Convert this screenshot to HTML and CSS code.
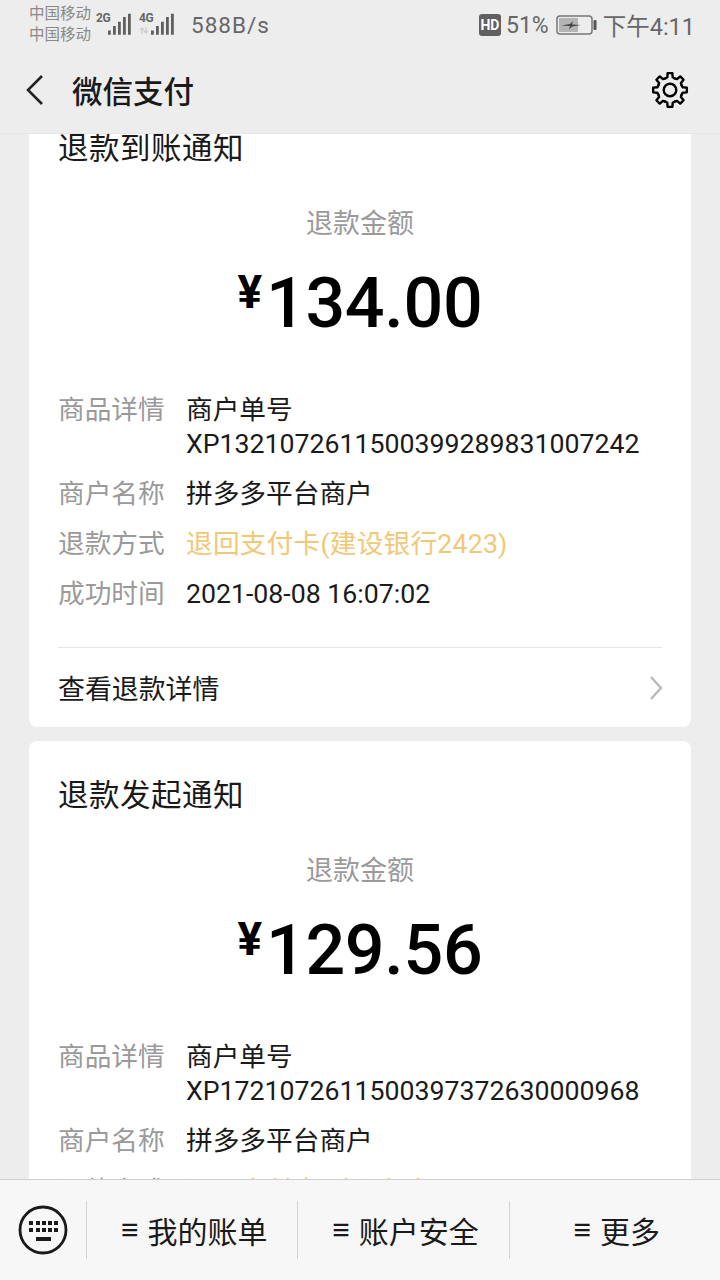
FILE: index.html
```html
<!DOCTYPE html>
<html lang="zh-CN">
<head>
    <meta charset="UTF-8">
    <meta name="viewport" content="width=device-width, initial-scale=1.0">
    <title>微信支付</title>
    <link rel="stylesheet" href="styles.css">
</head>
<body>
    <div class="app">
        <div class="status-bar">
            <div class="status-left">
                <div class="carriers">
                    <div>中国移动</div>
                    <div>中国移动</div>
                </div>
                <div class="signal">
                    <div class="net-col"><span class="net">2G</span></div>
                    <svg width="24" height="24" viewBox="0 0 24 24"><path d="M0 17.500h2.800v4.300H0zM5 13h2.800v8.800H5zM10 8.700h2.800v13.100H10zM15 4h2.800v17.800H15zM20 .800h2.800v21H20z" fill="#5f5f5f"/></svg>
                </div>
                <div class="signal second">
                    <div class="net-col">
                        <span class="net">4G</span>
                        <svg width="11" height="7" viewBox="0 0 11 7"><path d="M3 7V1L1 3M3 1l2 2M7 0v6L5 4M7 6l2-2" fill="none" stroke="#ccc" stroke-width="1.300"/></svg>
                    </div>
                    <svg width="24" height="24" viewBox="0 0 24 24"><path d="M0 17.500h2.800v4.300H0zM5 13h2.800v8.800H5zM10 8.700h2.800v13.100H10zM15 4h2.800v17.800H15zM20 .800h2.800v21H20z" fill="#5f5f5f"/></svg>
                </div>
                <span class="speed">588B/s</span>
            </div>
            <div class="status-right">
                <span class="hd">HD</span>
                <span class="pct">51%</span>
                <svg class="battery" width="41" height="20" viewBox="0 0 41 20">
                    <rect x="1" y="1" width="35" height="18" rx="3" fill="none" stroke="#777" stroke-width="1.500"/>
                    <rect x="3" y="3" width="19" height="14" fill="#b4b4b4"/>
                    <path d="M5 10.500l9-1.500 3-3-1 3.500 9 .5-9 1.500-3 3 1-3.500z" fill="#444"/>
                    <rect x="37.500" y="5" width="3" height="10" rx="1" fill="#555"/>
                </svg>
                <span class="clock">下午4:11</span>
            </div>
        </div>

        <div class="nav-bar">
            <svg class="back" width="20" height="32" viewBox="0 0 20 32"><path d="M17 2L3 16l14 14" fill="none" stroke="#222" stroke-width="2.600"/></svg>
            <div class="nav-title">微信支付</div>
            <svg class="gear" width="38" height="38" viewBox="0 0 38 38">
                <defs>
                    <path id="tooth" d="M14.220 7.450L16.300 6.300 16.630 2.170H21.370L21.700 6.300 23.780 7.450" fill="none" stroke="#000" stroke-width="2.400" stroke-linejoin="round" stroke-linecap="round"/>
                </defs>
                <use href="#tooth"/>
                <use href="#tooth" transform="rotate(45 19 19)"/>
                <use href="#tooth" transform="rotate(90 19 19)"/>
                <use href="#tooth" transform="rotate(135 19 19)"/>
                <use href="#tooth" transform="rotate(180 19 19)"/>
                <use href="#tooth" transform="rotate(225 19 19)"/>
                <use href="#tooth" transform="rotate(270 19 19)"/>
                <use href="#tooth" transform="rotate(315 19 19)"/>
                <circle cx="19" cy="19" r="6.300" fill="none" stroke="#000" stroke-width="2.400"/>
            </svg>
        </div>

        <div class="feed">
            <div class="card first">
                <div class="card-title">退款到账通知</div>
                <div class="amount-label">退款金额</div>
                <div class="amount"><span class="yen">¥</span>134.00</div>
                <div class="rows">
                    <div class="row">
                        <div class="key">商品详情</div>
                        <div class="val">商户单号<br>XP1321072611500399289831007242</div>
                    </div>
                    <div class="row">
                        <div class="key">商户名称</div>
                        <div class="val">拼多多平台商户</div>
                    </div>
                    <div class="row">
                        <div class="key">退款方式</div>
                        <div class="val orange">退回支付卡(建设银行2423)</div>
                    </div>
                    <div class="row">
                        <div class="key">成功时间</div>
                        <div class="val">2021-08-08 16:07:02</div>
                    </div>
                </div>
                <div class="card-link">
                    <span>查看退款详情</span>
                    <svg width="14" height="24" viewBox="0 0 14 24"><path d="M2 1l10 11L2 23" fill="none" stroke="#b8b8b8" stroke-width="2.400"/></svg>
                </div>
            </div>

            <div class="card">
                <div class="card-title">退款发起通知</div>
                <div class="amount-label">退款金额</div>
                <div class="amount"><span class="yen">¥</span>129.56</div>
                <div class="rows">
                    <div class="row">
                        <div class="key">商品详情</div>
                        <div class="val">商户单号<br>XP1721072611500397372630000968</div>
                    </div>
                    <div class="row">
                        <div class="key">商户名称</div>
                        <div class="val">拼多多平台商户</div>
                    </div>
                    <div class="row">
                        <div class="key">退款方式</div>
                        <div class="val orange">退回支付卡(建设银行2423)</div>
                    </div>
                </div>
            </div>
        </div>

        <div class="tab-bar">
            <div class="kb-cell">
                <svg width="50" height="50" viewBox="0 0 50 50">
                    <circle cx="25" cy="25" r="23" fill="none" stroke="#1a1a1a" stroke-width="2.800"/>
                    <path d="M11 16h4v4h-4zM18 16h4v4h-4zM24 16h4v4h-4zM30 16h4v4h-4zM36 16h4v4h-4zM11 23h4v4h-4zM18 23h4v4h-4zM24 23h4v4h-4zM30 23h4v4h-4zM36 23h4v4h-4zM18 32h15v4H18z" fill="#1a1a1a"/>
                </svg>
            </div>
            <div class="tab"><span class="tab-lines">≡</span>我的账单</div>
            <div class="tab"><span class="tab-lines">≡</span>账户安全</div>
            <div class="tab"><span class="tab-lines">≡</span>更多</div>
        </div>
    </div>
</body>
</html>
```

FILE: styles.css
```css
* {
    box-sizing: border-box;
}

html, body {
    margin: 0;
    height: 100%;
}

body {
    font-family: "Roboto", "Noto Sans CJK SC", sans-serif;
    background-color: #ededed;
    color: #1a1a1a;
}

.app {
    display: flex;
    flex-direction: column;
    width: 720px;
    height: 1280px;
    overflow: hidden;
}

.status-bar {
    display: flex;
    justify-content: space-between;
    align-items: center;
    height: 50px;
    padding: 0 25px 0 29px;
    color: #666;
    flex-shrink: 0;
}

.status-left, .status-right, .signal {
    display: flex;
    align-items: center;
}

.carriers {
    width: 62px;
    font-size: 15.500px;
    line-height: 21px;
    white-space: nowrap;
    color: #8a8a8a;
    margin-right: 5px;
}

.signal.second {
    margin-left: 7px;
}

.net-col {
    display: flex;
    flex-direction: column;
    width: 12px;
    height: 24px;
}

.net {
    font-size: 12px;
    line-height: 11px;
    font-weight: 700;
    letter-spacing: -0.5px;
    color: #666;
}

.net-col svg {
    margin-top: 3px;
}

.speed {
    font-size: 22.500px;
    letter-spacing: 1px;
    margin-left: 16px;
}

.hd {
    width: 22px;
    height: 22px;
    border-radius: 3px;
    background-color: #606060;
    color: #fff;
    font-size: 14px;
    font-weight: 700;
    line-height: 22px;
    text-align: center;
}

.pct {
    font-size: 23px;
    margin-left: 5px;
}

.battery {
    margin-left: 7px;
}

.clock {
    font-size: 23.500px;
    margin-left: 6px;
}

.nav-bar {
    display: flex;
    align-items: center;
    height: 84px;
    padding: 0 31px 4px 25px;
    background-color: #ededed;
    border-bottom: 1px solid #e6e6e6;
    flex-shrink: 0;
}

.nav-title {
    flex: 1;
    margin-left: 27px;
    font-size: 30.500px;
    font-weight: 500;
    color: #1a1a1a;
}

.feed {
    flex: 1;
    overflow: hidden;
    padding: 0 29px;
    min-height: 0;
}

.card {
    background-color: #fff;
    border-radius: 8px;
    padding: 33px 29px 0;
    margin-bottom: 14px;
}

.card.first {
    margin-top: -40px;
    border-radius: 0 0 8px 8px;
}

.card-title {
    font-size: 30.500px;
    line-height: 44px;
    letter-spacing: 0.5px;
}

.amount-label {
    margin-top: 33px;
    font-size: 27px;
    line-height: 40px;
    text-align: center;
    color: #9a9a9a;
}

.amount {
    margin-top: 7px;
    font-size: 70px;
    line-height: 82px;
    font-weight: 500;
    text-align: center;
    color: #000;
    letter-spacing: -0.3px;
}

.yen {
    font-size: 46px;
    font-weight: 700;
    vertical-align: 19px;
    margin-right: 4px;
}

.rows {
    margin-top: 49px;
}

.row {
    display: flex;
    margin-bottom: 16px;
    font-size: 26.700px;
    line-height: 34px;
}

.key {
    width: 128px;
    flex-shrink: 0;
    color: #9a9a9a;
}

.val {
    color: #1a1a1a;
}

.val.orange {
    color: #f0c878;
    letter-spacing: 0.2px;
}

.card-link {
    display: flex;
    justify-content: space-between;
    align-items: center;
    height: 80px;
    margin-top: 36px;
    border-top: 1px solid #e6e6e6;
    font-size: 26.900px;
}

.card-link svg {
    margin-right: -1px;
}

.tab-bar {
    display: flex;
    align-items: center;
    height: 101px;
    background-color: #f7f7f7;
    border-top: 1px solid #cfcfcf;
    flex-shrink: 0;
}

.kb-cell {
    display: flex;
    align-items: center;
    justify-content: center;
    width: 87px;
    height: 58px;
    border-right: 1px solid #d4d4d4;
}

.tab {
    flex: 1;
    display: flex;
    align-items: center;
    justify-content: center;
    height: 58px;
    padding-left: 4px;
    font-size: 30px;
    color: #1a1a1a;
    border-right: 1px solid #d4d4d4;
}

.tab:last-child {
    border-right: none;
}

.tab-lines {
    margin-right: 9px;
    font-family: "Liberation Sans", sans-serif;
    font-size: 30px;
    font-weight: 700;
}
```
